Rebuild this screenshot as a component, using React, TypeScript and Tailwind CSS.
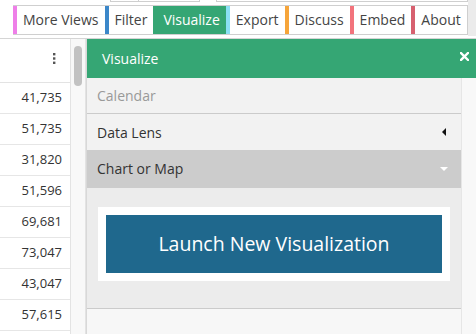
import React from 'react';

const tabs = [
  { label: 'More Views', border: 'border-[#ee7fe8]', active: false },
  { label: 'Filter', border: 'border-[#3b87c9]', active: false },
  { label: 'Visualize', border: 'border-[#35a674]', active: true },
  { label: 'Export', border: 'border-[#8be0f5]', active: false },
  { label: 'Discuss', border: 'border-[#f6a53a]', active: false },
  { label: 'Embed', border: 'border-[#f2737c]', active: false },
  { label: 'About', border: 'border-[#d7606f]', active: false },
];

const values = ['41,735', '51,735', '31,820', '51,596', '69,681', '73,047', '43,047', '57,615'];

export default function App() {
  return (
    <div
      className="w-[476px] h-[334px] overflow-hidden bg-white flex flex-col text-[#333]"
      style={{ fontFamily: '"Open Sans", "Noto Sans", sans-serif' }}
    >
      {/* Toolbar */}
      <div className="h-[39px] flex border-b border-[#d5d5d5]">
        <div className="flex-1 flex flex-col">
          {/* bottoms of the controls above, cut off */}
          <div className="h-[2px] flex">
            <div className="w-[110px]" />
            <div className="w-[29px] border border-t-0 border-[#cfcfcf]" />
            <div className="w-[61px] border border-t-0 border-l-0 border-[#cfcfcf]" />
            <div className="w-[16px]" />
            <div className="w-[252px] border border-t-0 border-[#cfcfcf]" />
          </div>
          <div className="pl-[13px] pt-[3px]">
            <div className="flex h-[30px] border border-l-0 border-[#cfcfcf] w-fit">
              {tabs.map((t) => (
                <div
                  key={t.label}
                  className={`border-l-4 ${t.border} pl-[6px] pr-[6px] flex items-center text-[14px] leading-none ${
                    t.active ? 'bg-[#35a674] text-white' : 'bg-white text-[#444]'
                  }`}
                >
                  {t.label}
                </div>
              ))}
            </div>
          </div>
        </div>
        <div className="w-[8px] h-[36px] bg-[#ebebeb]" />
      </div>

      <div className="flex flex-1 min-h-0">
        {/* Table column */}
        <div className="w-[71px] border-r border-[#e3e3e3] flex flex-col">
          <div className="h-[44px] border-b border-[#e3e3e3] flex items-center justify-end pr-[14px] pb-[4px] text-[#555]">
            <svg width="3" height="11" viewBox="0 0 3 11" fill="currentColor">
              <rect x="0" y="0" width="2.4" height="2.4" />
              <rect x="0" y="4.3" width="2.4" height="2.4" />
              <rect x="0" y="8.6" width="2.4" height="2.4" />
            </svg>
          </div>
          {values.map((v) => (
            <div
              key={v}
              className="h-[31px] shrink-0 border-b border-[#e6e6e6] flex items-center justify-end pr-[8px] text-[13px] text-[#333]"
            >
              {v}
            </div>
          ))}
        </div>

        {/* Scrollbar */}
        <div className="w-[15px] bg-[#f8f8f8] border-r border-[#e3e3e3] flex justify-center pt-[7px]">
          <div className="w-[8px] h-[40px] rounded-full bg-[#c2c2c2]" />
        </div>

        {/* Visualize panel */}
        <div className="flex-1 flex flex-col border-l border-[#d8d8d8]">
          <div className="h-[39px] shrink-0 bg-[#35a674] text-white flex items-center justify-between pl-[15px] pr-[7px]">
            <span className="text-[14px]">Visualize</span>
            <svg width="9" height="9" viewBox="0 0 9 9" className="mb-[4px]">
              <path d="M1 1 L8 8 M8 1 L1 8" stroke="white" strokeWidth="2.4" strokeLinecap="square" />
            </svg>
          </div>
          <div className="flex flex-1 min-h-0">
            <div className="flex-1 flex flex-col bg-[#f7f7f7]">
              <div className="h-[36px] shrink-0 bg-[#f2f2f2] border-b border-[#cbcbcb] flex items-center pl-[10px] text-[14px] text-[#999]">
                Calendar
              </div>
              <div className="h-[36px] shrink-0 bg-[#f2f2f2] flex items-center justify-between pl-[10px] pr-[15px] text-[14px] text-[#333]">
                <span>Data Lens</span>
                <svg width="4" height="8" viewBox="0 0 4 8">
                  <path d="M4 0 L0 4 L4 8 Z" fill="#111" />
                </svg>
              </div>
              <div className="h-[38px] shrink-0 bg-[#cccccc] flex items-center justify-between pl-[10px] pr-[13px] pb-[2px] text-[14px] text-[#333]">
                <span>Chart or Map</span>
                <svg width="8" height="4" viewBox="0 0 8 4" className="mt-[2px]">
                  <path d="M0 0 L8 0 L4 4 Z" fill="#fff" />
                </svg>
              </div>
              <div className="h-[121px] shrink-0 bg-[#ececec] border-b border-[#cbcbcb] px-[11px] pt-[19px]">
                <div className="bg-white p-[8px]">
                  <div className="h-[58px] bg-[#1f688d] text-white text-[19.5px] flex items-center justify-center">
                    Launch New Visualization
                  </div>
                </div>
              </div>
            </div>
            <div className="w-[15px] bg-[#f8f8f8] border-l border-[#e6e6e6]" />
          </div>
        </div>
      </div>
    </div>
  );
}
